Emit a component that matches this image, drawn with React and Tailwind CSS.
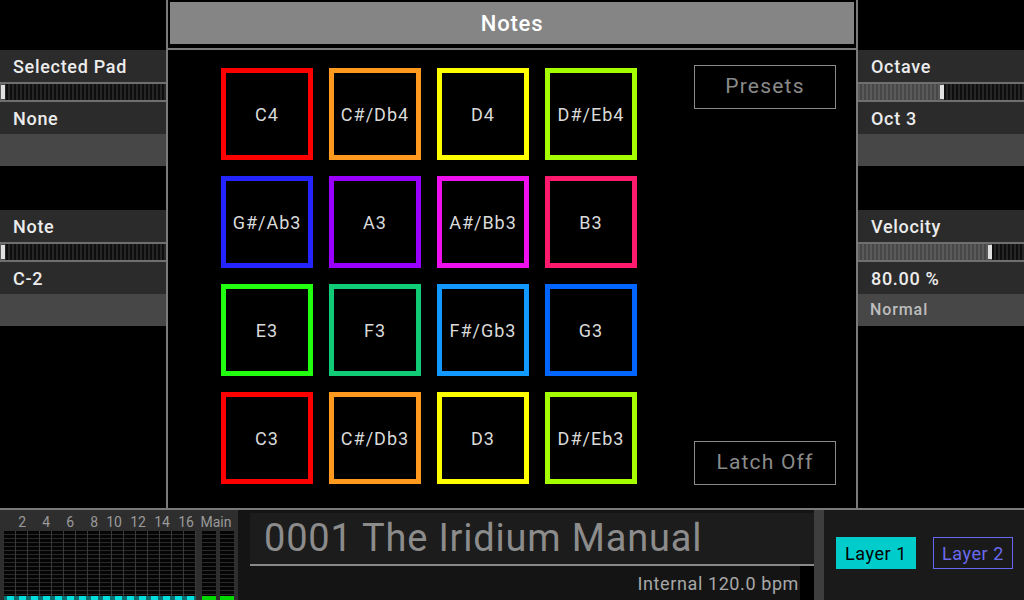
import React from "react";

const pads = [
  { label: "C4", color: "border-[#ff0000]" },
  { label: "C#/Db4", color: "border-[#ff9a1f]" },
  { label: "D4", color: "border-[#ffff00]" },
  { label: "D#/Eb4", color: "border-[#a6ff00]" },
  { label: "G#/Ab3", color: "border-[#2424ff]" },
  { label: "A3", color: "border-[#9900ff]" },
  { label: "A#/Bb3", color: "border-[#ee11ee]" },
  { label: "B3", color: "border-[#ff1a6e]" },
  { label: "E3", color: "border-[#22ff11]" },
  { label: "F3", color: "border-[#11cc77]" },
  { label: "F#/Gb3", color: "border-[#1199ff]" },
  { label: "G3", color: "border-[#0066ff]" },
  { label: "C3", color: "border-[#ff0000]" },
  { label: "C#/Db3", color: "border-[#ff9a1f]" },
  { label: "D3", color: "border-[#ffff00]" },
  { label: "D#/Eb3", color: "border-[#a6ff00]" },
];

const meterNums = ["2", "4", "6", "8", "10", "12", "14", "16"];

// slider track, fillClass sets how far the lighter part goes
function Slider({ fillClass }) {
  return (
    <div className="h-[20px] border-y-2 border-[#6f6f6f] flex bg-[repeating-linear-gradient(90deg,#262626_0px,#262626_2px,#0e0e0e_2px,#0e0e0e_4px)]">
      <div
        className={`${fillClass} h-full flex justify-end bg-[repeating-linear-gradient(90deg,#5a5a5a_0px,#5a5a5a_2px,#474747_2px,#474747_4px)]`}
      >
        <div className="w-[4px] my-[1px] bg-[#e0e0e0]" />
      </div>
    </div>
  );
}

function ParamGroup({ label, value, fillClass, sub }) {
  return (
    <div>
      <div className="h-[32px] bg-[#2b2b2b] flex items-center pl-[13px] text-[18px] tracking-[0.7px] text-[#ececec]">
        {label}
      </div>
      <Slider fillClass={fillClass} />
      <div className="h-[32px] bg-[#2b2b2b] flex items-center pl-[13px] text-[18px] tracking-[0.7px] text-[#ececec]">
        {value}
      </div>
      <div className="h-[32px] bg-[#474747] flex items-center pl-[12px] text-[16px] tracking-[0.9px] text-[#bdbdbd]">
        {sub}
      </div>
    </div>
  );
}

function MeterColumn() {
  return (
    <div className="flex-1 bg-[repeating-linear-gradient(180deg,#050505_0px,#050505_3px,#2a2a2a_3px,#2a2a2a_4px)]" />
  );
}

function Meter() {
  return (
    <div className="w-[238px] bg-[#2e2e2e] flex flex-col">
      <div className="h-[21px] flex items-end text-[14px] font-normal text-[#9a9a9a] leading-none pb-[2px]">
        <div className="w-[196px] pl-[4px] flex">
          {meterNums.map((n) => (
            <div key={n} className="w-[24px] text-right pr-[2px]">
              {n}
            </div>
          ))}
        </div>
        <div className="w-[40px] text-center">Main</div>
      </div>
      <div className="flex-1 flex">
        <div className="ml-[4px] w-[192px] flex flex-col">
          <div className="flex-1 flex bg-[repeating-linear-gradient(180deg,#050505_0px,#050505_3px,#2a2a2a_3px,#2a2a2a_4px)]">
            {Array.from({ length: 16 }).map((_, i) => (
              <div key={i} className="w-[12px] border-r border-[#3a3a3a]" />
            ))}
          </div>
          <div className="h-[4px] flex bg-[#0b6d6d]">
            {Array.from({ length: 16 }).map((_, i) => (
              <div key={i} className="w-[12px] flex justify-center">
                <div className="w-[7px] bg-[#00dede]" />
              </div>
            ))}
          </div>
        </div>
        <div className="ml-[6px] w-[14px] flex flex-col">
          <MeterColumn />
          <div className="h-[4px] bg-[#00d800]" />
        </div>
        <div className="ml-[4px] w-[14px] flex flex-col">
          <MeterColumn />
          <div className="h-[4px] bg-[#00d800]" />
        </div>
      </div>
    </div>
  );
}

export default function App() {
  return (
    <div className="w-[1024px] h-[600px] bg-black flex flex-col overflow-hidden font-['Roboto',sans-serif] font-medium">
      <div className="h-[508px] flex">
        {/* left params */}
        <div className="w-[166px] pt-[50px] flex flex-col gap-[44px]">
          <ParamGroup label="Selected Pad" value="None" fillClass="w-[5px]" sub="" />
          <ParamGroup label="Note" value="C-2" fillClass="w-[5px]" sub="" />
        </div>

        {/* center */}
        <div className="w-[692px] border-x-2 border-[#7a7a7a] flex flex-col">
          <div className="h-[50px] p-[2px] pb-[4px] border-b-2 border-[#7a7a7a]">
            <div className="h-full bg-[#858585] flex items-center justify-center text-[22px] tracking-[0.8px] text-white">
              Notes
            </div>
          </div>
          <div className="flex-1 flex pl-[53px] pt-[15px] pb-[23px]">
            <div className="grid grid-cols-4 gap-4 mt-[3px] self-start">
              {pads.map((p) => (
                <div
                  key={p.label}
                  className={`w-[92px] h-[92px] border-[5px] ${p.color} flex items-center justify-center text-[18px] font-normal tracking-[1px] text-[#dadada]`}
                >
                  {p.label}
                </div>
              ))}
            </div>
            <div className="ml-[57px] flex flex-col justify-between">
              <div className="w-[142px] h-[44px] border border-[#8a8a8a] flex items-center justify-center text-[21px] font-normal text-[#8a8a8a] tracking-[1.2px]">
                Presets
              </div>
              <div className="w-[142px] h-[44px] border border-[#8a8a8a] flex items-center justify-center text-[21px] font-normal text-[#8a8a8a] tracking-[1.2px]">
                Latch Off
              </div>
            </div>
          </div>
        </div>

        {/* right params */}
        <div className="w-[166px] pt-[50px] flex flex-col gap-[44px]">
          <ParamGroup label="Octave" value="Oct 3" fillClass="w-[86px]" sub="" />
          <ParamGroup label="Velocity" value="80.00 %" fillClass="w-[134px]" sub="Normal" />
        </div>
      </div>

      {/* bottom bar */}
      <div className="h-[92px] border-t-2 border-[#7a7a7a] flex">
        <Meter />
        <div className="w-[12px] bg-[#141414]" />
        <div className="w-[564px] bg-[#141414] flex flex-col pt-[3px]">
          <div className="h-[53px] bg-[#1c1c1c] border-b-2 border-[#8a8a8a] flex items-center pl-[14px] text-[38px] font-normal text-[#8c8c8c] tracking-[0.8px]">
            0001 The Iridium Manual
          </div>
          <div className="flex-1 flex">
            <div className="flex-1 flex items-center justify-end pr-[1px] text-[18px] font-normal tracking-[0.6px] text-[#a8a8a8]">
              Internal 120.0 bpm
            </div>
            <div className="w-[14px] bg-black" />
          </div>
        </div>
        <div className="w-[10px] bg-[#3e3e3e]" />
        <div className="flex-1 bg-[#1a1a1a] flex items-center pl-[12px] gap-[17px] pb-[4px]">
          <div className="w-[80px] h-[32px] bg-[#00cccc] flex items-center justify-center text-[18px] font-normal tracking-[0.6px] text-black">
            Layer 1
          </div>
          <div className="w-[80px] h-[32px] border border-[#6666ee] flex items-center justify-center text-[18px] font-normal tracking-[0.6px] text-[#6a6aee]">
            Layer 2
          </div>
        </div>
      </div>
    </div>
  );
}
